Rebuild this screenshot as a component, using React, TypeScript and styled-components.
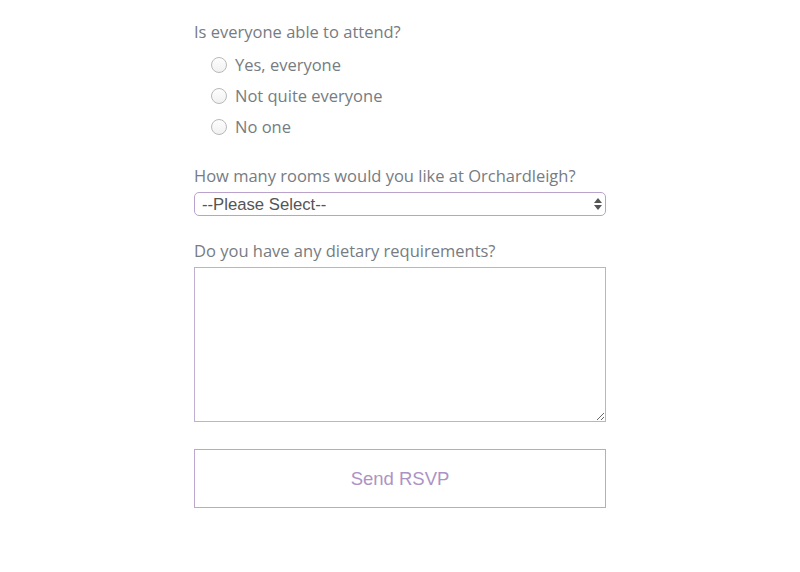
import React from "react";
import styled, { createGlobalStyle } from "styled-components";

const Global = createGlobalStyle`
  html, body { margin: 0; padding: 0; background: #fff; }
  body { font-family: "Open Sans", sans-serif; }
`;

const Form = styled.form`
  width: 412px;
  margin: 0 0 0 194px;
  padding-top: 21px;
  display: flex;
  flex-direction: column;
`;

const Field = styled.div<{ $gap?: number }>`
  display: flex;
  flex-direction: column;
  margin-bottom: ${(p) => p.$gap ?? 0}px;
`;

const Label = styled.label`
  font-family: "Open Sans", sans-serif;
  font-size: 16.5px;
  line-height: 22px;
  color: #767c82;
  margin-bottom: 5px;
`;

const Options = styled.div`
  display: flex;
  flex-direction: column;
  padding-left: 17px;
  padding-top: 1px;
`;

const Option = styled.label`
  display: flex;
  align-items: center;
  height: 31px;
  font-family: "Open Sans", sans-serif;
  font-size: 16.5px;
  color: #767c82;
  gap: 8px;
`;

const Radio = styled.input`
  appearance: none;
  margin: 0;
  width: 16px;
  height: 16px;
  border-radius: 50%;
  border: 1px solid #b9b9b9;
  background: linear-gradient(#fdfdfd, #f1f1f1);
  box-sizing: border-box;
`;

const SelectWrap = styled.div`
  position: relative;
  height: 24px;
`;

const Select = styled.select`
  appearance: none;
  width: 100%;
  height: 24px;
  box-sizing: border-box;
  border: 1px solid #b9a3cc;
  border-radius: 5px;
  background: #fff;
  font-family: "Liberation Sans", Arial, sans-serif;
  font-size: 16.7px;
  color: #555;
  padding: 0 0 0 7px;
  margin: 0;
`;

const Arrows = styled.svg`
  position: absolute;
  right: 4px;
  top: 6px;
  pointer-events: none;
`;

const TextArea = styled.textarea`
  width: 412px;
  height: 155px;
  box-sizing: border-box;
  border: 1px solid #c1aed3;
  margin: 0;
  resize: vertical;
`;

const Button = styled.button`
  width: 412px;
  height: 59px;
  box-sizing: border-box;
  border: 1px solid #bba7cf;
  background: #fff;
  font-family: "Liberation Sans", Arial, sans-serif;
  font-size: 18.5px;
  color: #ad93c4;
  margin: 0;
`;

export default function App() {
  return (
    <>
      <Global />
      <Form>
        <Field $gap={23}>
          <Label>Is everyone able to attend?</Label>
          <Options>
            <Option><Radio type="radio" name="attend" />Yes, everyone</Option>
            <Option><Radio type="radio" name="attend" />Not quite everyone</Option>
            <Option><Radio type="radio" name="attend" />No one</Option>
          </Options>
        </Field>
        <Field $gap={24}>
          <Label>How many rooms would you like at Orchardleigh?</Label>
          <SelectWrap>
            <Select defaultValue="">
              <option value="">--Please Select--</option>
              <option value="1">1</option>
              <option value="2">2</option>
            </Select>
            <Arrows width="8" height="12" viewBox="0 0 8 12">
              <path d="M4 0 L8 5 L0 5 Z" fill="#555" />
              <path d="M4 12 L8 7 L0 7 Z" fill="#555" />
            </Arrows>
          </SelectWrap>
        </Field>
        <Field $gap={27}>
          <Label>Do you have any dietary requirements?</Label>
          <TextArea />
        </Field>
        <Button type="button">Send RSVP</Button>
      </Form>
    </>
  );
}
